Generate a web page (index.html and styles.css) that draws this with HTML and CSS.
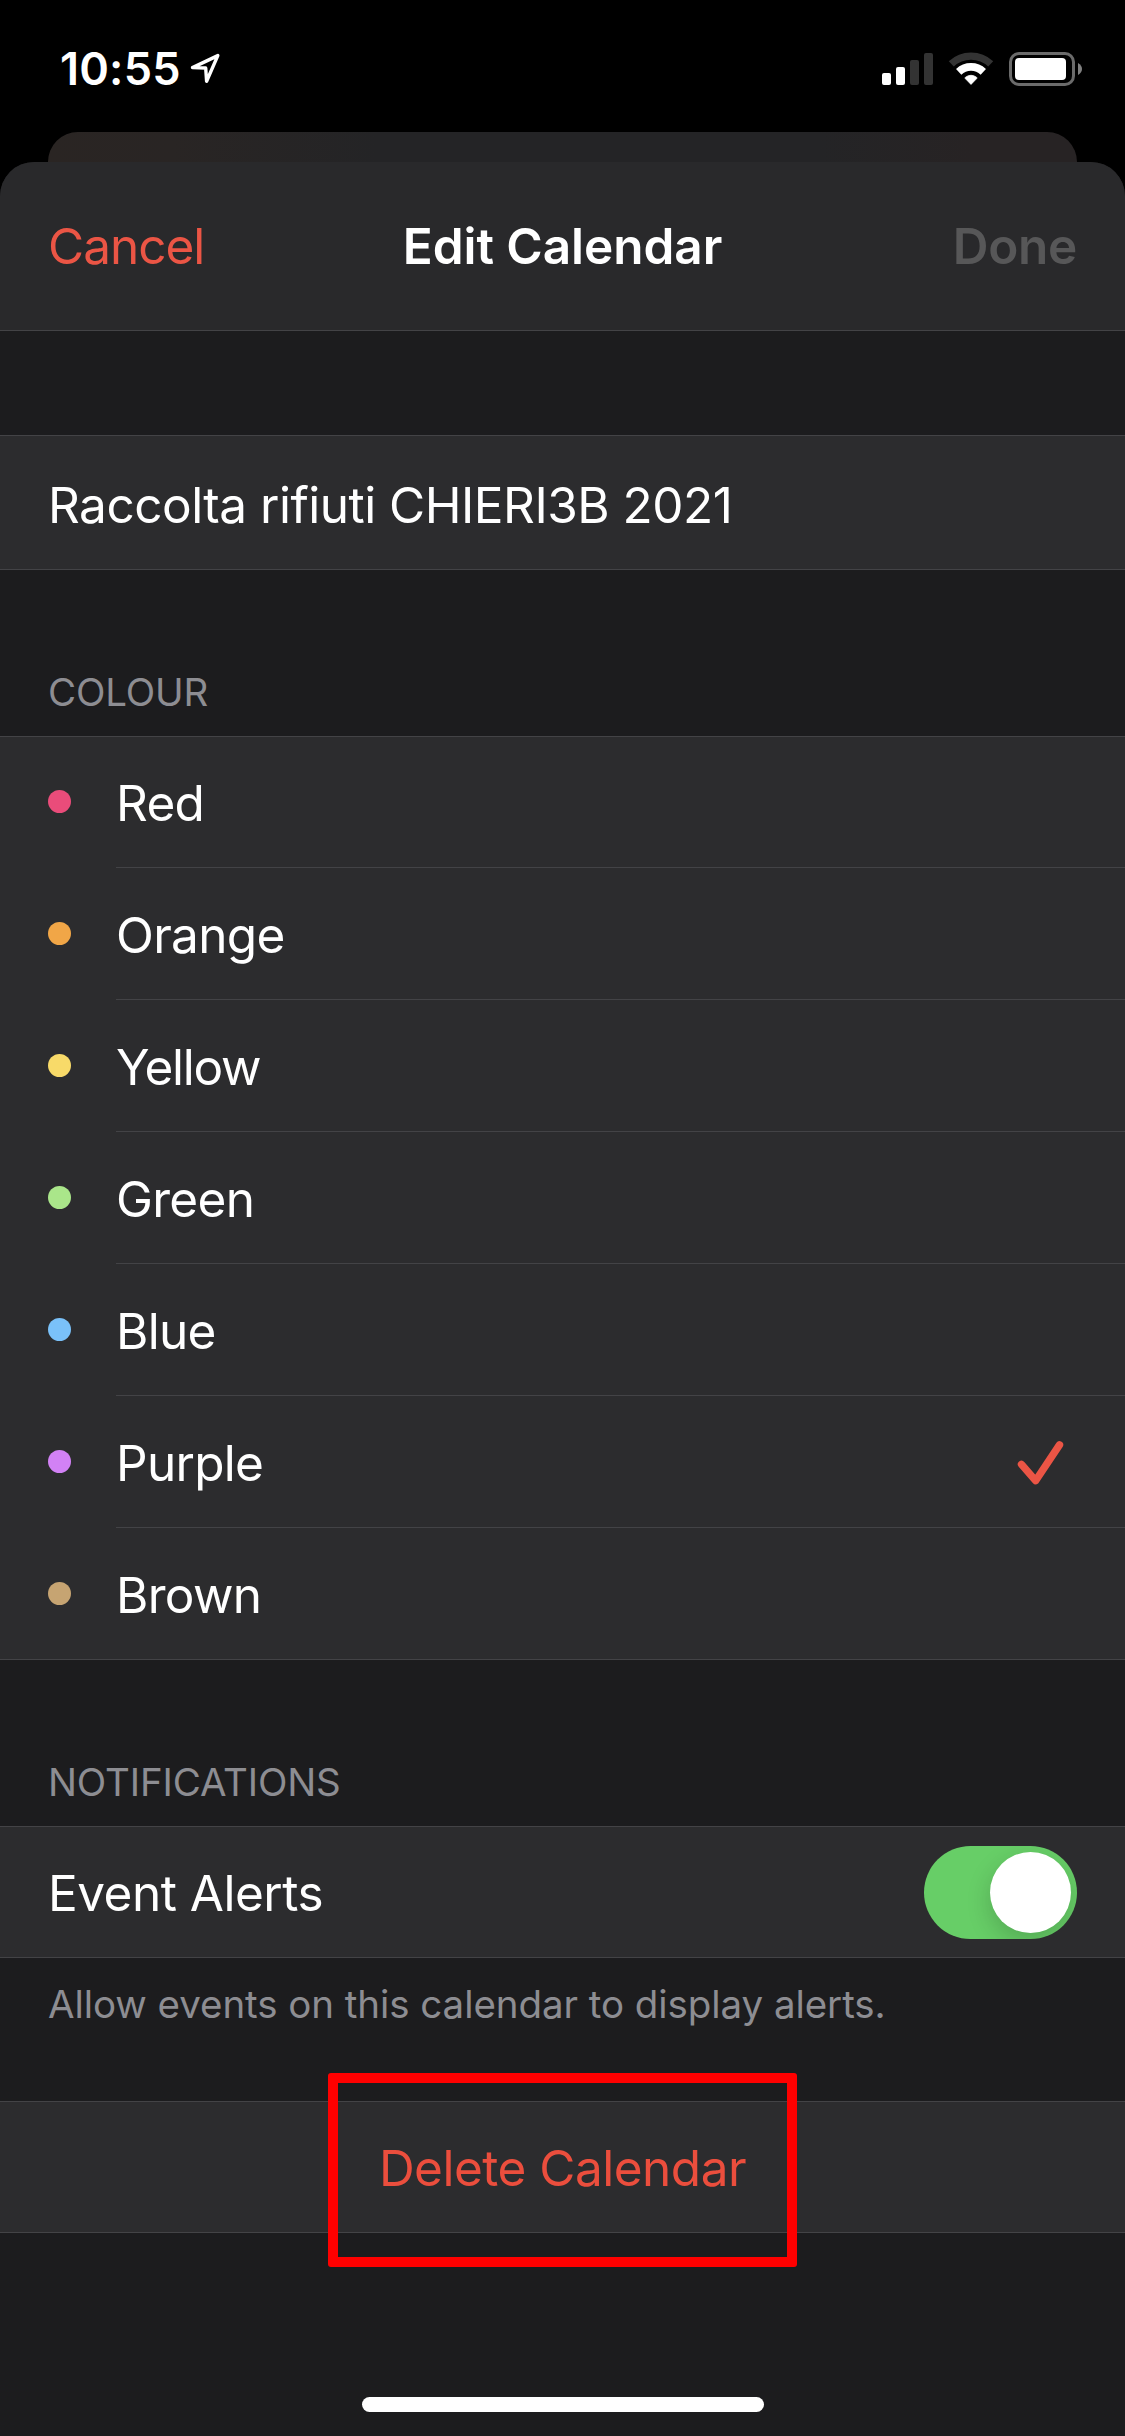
FILE: index.html
```html
<!DOCTYPE html>
<html lang="en">
<head>
<meta charset="utf-8">
<title>Edit Calendar</title>
<link rel="stylesheet" href="styles.css">
</head>
<body>
<div class="screen">
  <header class="status">
    <div class="status-left">
      <span class="time">10:55</span>
      <svg class="location" width="32" height="32" viewBox="0 0 32 32"><path d="M3.5 15.6 28.8 3.6 17.6 29.2 16.7 16Z" fill="none" stroke="#fff" stroke-width="3.4" stroke-linejoin="round"/></svg>
    </div>
    <div class="status-right">
      <svg width="42" height="34" viewBox="0 0 42 34"><g fill="#fff"><rect x="0" y="21" width="9" height="12" rx="2"/><rect x="14" y="15" width="9" height="18" rx="2"/></g><g fill="#333"><rect x="28" y="8" width="9" height="25" rx="2"/><rect x="42" y="1" width="9" height="32" rx="2"/></g></svg>
      <svg class="wifi" width="46" height="34" viewBox="0 0 46 34"><path d="M3.3 11.9A28.9 28.9 0 0 1 42.7 11.9" fill="none" stroke="#333" stroke-width="7.4"/><path d="M10.7 19.8A18 18 0 0 1 35.3 19.8" fill="none" stroke="#fff" stroke-width="7.8"/><path d="M23 32.4 17.3 26.6Q16.7 25.8 17.5 25.2Q23 21.4 28.5 25.2Q29.3 25.8 28.7 26.6Z" fill="#fff" stroke="#fff" stroke-width=".8" stroke-linejoin="round"/></svg>
      <svg class="battery" width="74" height="34" viewBox="0 0 74 34"><rect x="1.5" y="1.5" width="63" height="31" rx="8.5" fill="none" stroke="#6b6b6b" stroke-width="3"/><rect x="6" y="6" width="51" height="22" rx="4" fill="#fff"/><path d="M69 11Q73 13.5 73 17T69 23Z" fill="#808080"/></svg>
    </div>
  </header>
  <div class="sheet-behind"></div>
  <main class="sheet">
    <nav class="nav">
      <span class="cancel">Cancel</span>
      <span class="title">Edit Calendar</span>
      <span class="done">Done</span>
    </nav>
    <section class="group name"><div class="cell"><span>Raccolta rifiuti CHIERI3B 2021</span></div></section>
    <h2 class="heading">COLOUR</h2>
    <section class="group colours">
      <div class="row"><i class="dot red"></i><span class="label">Red</span></div>
      <div class="row"><i class="dot orange"></i><span class="label">Orange</span></div>
      <div class="row"><i class="dot yellow"></i><span class="label tight">Yellow</span></div>
      <div class="row"><i class="dot green"></i><span class="label">Green</span></div>
      <div class="row"><i class="dot blue"></i><span class="label">Blue</span></div>
      <div class="row"><i class="dot purple"></i><span class="label">Purple<svg class="check" width="47" height="46" viewBox="0 0 47 46"><path d="M4.5 24.3 18.6 40.7 42.5 4.9" fill="none" stroke="#eb5545" stroke-width="7.4" stroke-linecap="round" stroke-linejoin="round"/></svg></span></div>
      <div class="row"><i class="dot brown"></i><span class="label">Brown</span></div>
    </section>
    <h2 class="heading">NOTIFICATIONS</h2>
    <section class="group"><div class="cell alerts"><span>Event Alerts</span><div class="toggle"><div class="knob"></div></div></div></section>
    <p class="note">Allow events on this calendar to display alerts.</p>
    <section class="group"><div class="cell delete"><span>Delete Calendar</span><div class="highlight"></div></div></section>
    <div class="home"></div>
  </main>
</div>
</body>
</html>
```
FILE: styles.css
```css
* { box-sizing: border-box; }
body { margin: 0; background: #000; }
.screen {
  width: 1125px; height: 2436px; overflow: hidden;
  display: flex; flex-direction: column;
  background: #000; color: #fff;
  font: 400 49.5px/60px Inter, "Liberation Sans", sans-serif;
  letter-spacing: -0.5px;
}
svg { display: block; flex: none; overflow: visible; }

.status {
  height: 132px; padding: 52px 42px 0 60px;
  display: flex; justify-content: space-between; align-items: flex-start;
}
.status-left, .status-right { display: flex; align-items: flex-start; }
.time { width: 129px; height: 34px; font-size: 45px; line-height: 34px; font-weight: 600; letter-spacing: 0.2px; }
.wifi { margin-left: 24px; }
.battery { margin-left: 15px; }

.sheet-behind {
  flex: none; height: 30px; margin: 0 48px;
  border-radius: 30px 30px 0 0;
  background: linear-gradient(90deg, #2a2523 0, #292524 12%, #242426 32%, #242426 75%, #272324 90%, #272324);
}
.sheet {
  flex: 1; display: flex; flex-direction: column;
  background: #1c1c1e; border-radius: 34px 34px 0 0; overflow: hidden;
}
.nav {
  display: grid; grid-template-columns: 1fr auto 1fr;
  padding: 54px 48px; background: #29292b; border-bottom: 1px solid #434346;
  margin-bottom: 104px;
}
.cancel { color: #eb5545; letter-spacing: -1px; }
.title { font-weight: 600; letter-spacing: -0.05px; }
.done { font-weight: 600; color: #575758; text-align: right; letter-spacing: -0.3px; }

.group { background: #2c2c2e; border: solid #434346; border-width: 1px 0; }
.cell {
  height: 130px; padding: 0 48px 34px;
  display: flex; align-items: flex-end; position: relative;
}
.name .cell { height: 133px; }
.heading, .note { margin: 0; font-size: 38.5px; line-height: 46px; font-weight: 400; color: #8d8d92; letter-spacing: -0.15px; }
.heading { padding: 99px 48px 21px; }
.note { padding: 23px 48px 74px; letter-spacing: -0.06px; }

.row { height: 132px; padding-left: 48px; display: flex; align-items: flex-end; }
.row:first-child, .row:last-child { height: 131px; }
.dot { width: 23px; height: 23px; margin: 0 45px 55px 0; border-radius: 50%; }
.label {
  flex: 1; display: flex; justify-content: space-between;
  padding: 0 61px 34px 0; border-bottom: 1px solid #434346;
  letter-spacing: -0.7px;
}
.row:last-child .label { border-bottom: 0; }
.row:last-child .dot { margin-bottom: 54px; }
.label.tight { letter-spacing: -1.3px; }
.check { margin-top: 7px; }
.red { background: #ea4c7a; }
.orange { background: #f1a647; }
.yellow { background: #f8da69; }
.green { background: #aae68a; }
.blue { background: #7ac1f9; }
.purple { background: #d281f5; }
.brown { background: #c6a472; }

.alerts { justify-content: space-between; }
.toggle {
  width: 153px; height: 93px; padding: 6px; margin-bottom: -16px;
  border-radius: 47px; background: #67ce67; overflow: hidden;
}
.knob {
  width: 81px; height: 81px; margin-left: auto; border-radius: 50%;
  background: #fff; box-shadow: 0 9px 24px rgba(0, 0, 0, .18);
}
.delete { justify-content: center; color: #eb4e3d; }
.highlight {
  position: absolute; left: 328px; top: -29px; width: 469px; height: 194px;
  border: 10px solid #f00; border-radius: 3px;
}
.home { width: 402px; height: 15px; margin: auto auto 24px 362px; border-radius: 8px; background: #fff; }
```
